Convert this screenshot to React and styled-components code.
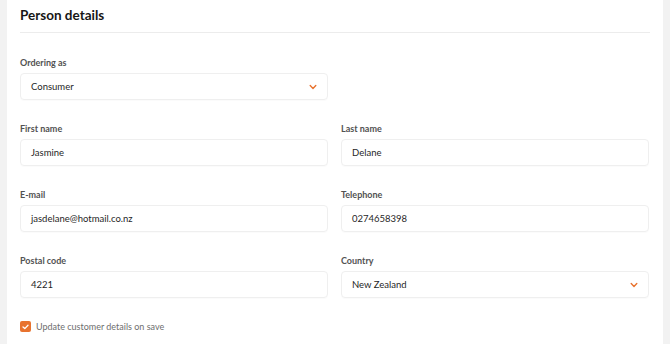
import React from "react";
import styled, { createGlobalStyle } from "styled-components";

const GlobalStyle = createGlobalStyle`
  html, body {
    margin: 0;
    padding: 0;
    background: #f2f2f2;
    font-family: Lato, "Liberation Sans", sans-serif;
  }
`;

const Page = styled.div`
  padding: 0 7px;
  height: 344px;
  overflow: hidden;
`;

const Card = styled.section`
  background: #ffffff;
  height: 100%;
  padding: 0 13px;
  box-sizing: border-box;
`;

const Header = styled.div`
  height: 33px;
  display: flex;
  align-items: center;
  border-bottom: 1px solid #ececec;
  padding-bottom: 3px;
  box-sizing: border-box;

  h2 {
    margin: 0;
    font-size: 13.5px;
    font-weight: 700;
    color: #161616;
  }
`;

const Grid = styled.div`
  display: grid;
  grid-template-columns: 308px 308px;
  column-gap: 13px;
  row-gap: 22px;
  padding-top: 23px;
`;

const Field = styled.div`
  display: flex;
  flex-direction: column;
  gap: 4px;
`;

const FullRow = styled.div`
  grid-column: 1 / -1;
`;

const Label = styled.label`
  font-size: 9px;
  font-weight: 700;
  color: #525252;
  line-height: 13px;
`;

const Box = styled.div`
  height: 27px;
  box-sizing: border-box;
  border: 1px solid #efefef;
  border-radius: 4px;
  display: flex;
  align-items: center;
  justify-content: space-between;
  padding: 0 10px;
  font-size: 9.5px;
  color: #1f1f1f;
  box-shadow: 0 1px 1px rgba(0, 0, 0, 0.02);
`;

const Check = styled.div`
  display: flex;
  align-items: center;
  gap: 5px;
  margin-top: 1px;
  font-size: 9px;
  color: #6e6e6e;
`;

const Tick = styled.span`
  width: 11px;
  height: 11px;
  border-radius: 2px;
  background: #e8732f;
  display: inline-flex;
  align-items: center;
  justify-content: center;
`;

function Chevron() {
  return (
    <svg width="8" height="6" viewBox="0 0 8 6">
      <path d="M1.2 1.6 L4 4.4 L6.8 1.6" fill="none" stroke="#e8732f" strokeWidth="1.4" strokeLinecap="round" strokeLinejoin="round" />
    </svg>
  );
}

function Input({ label, value, select }) {
  return (
    <Field>
      <Label>{label}</Label>
      <Box>
        <span>{value}</span>
        {select && <Chevron />}
      </Box>
    </Field>
  );
}

export default function App() {
  return (
    <Page>
      <GlobalStyle />
      <Card>
        <Header>
          <h2>Person details</h2>
        </Header>
        <Grid>
          <Input label="Ordering as" value="Consumer" select />
          <div />
          <Input label="First name" value="Jasmine" />
          <Input label="Last name" value="Delane" />
          <Input label="E-mail" value="jasdelane@hotmail.co.nz" />
          <Input label="Telephone" value="0274658398" />
          <Input label="Postal code" value="4221" />
          <Input label="Country" value="New Zealand" select />
          <FullRow>
            <Check>
              <Tick>
                <svg width="7" height="6" viewBox="0 0 7 6">
                  <path d="M1 3 L2.8 4.6 L6 1.2" fill="none" stroke="#fff" strokeWidth="1.3" strokeLinecap="round" strokeLinejoin="round" />
                </svg>
              </Tick>
              Update customer details on save
            </Check>
          </FullRow>
        </Grid>
      </Card>
    </Page>
  );
}
